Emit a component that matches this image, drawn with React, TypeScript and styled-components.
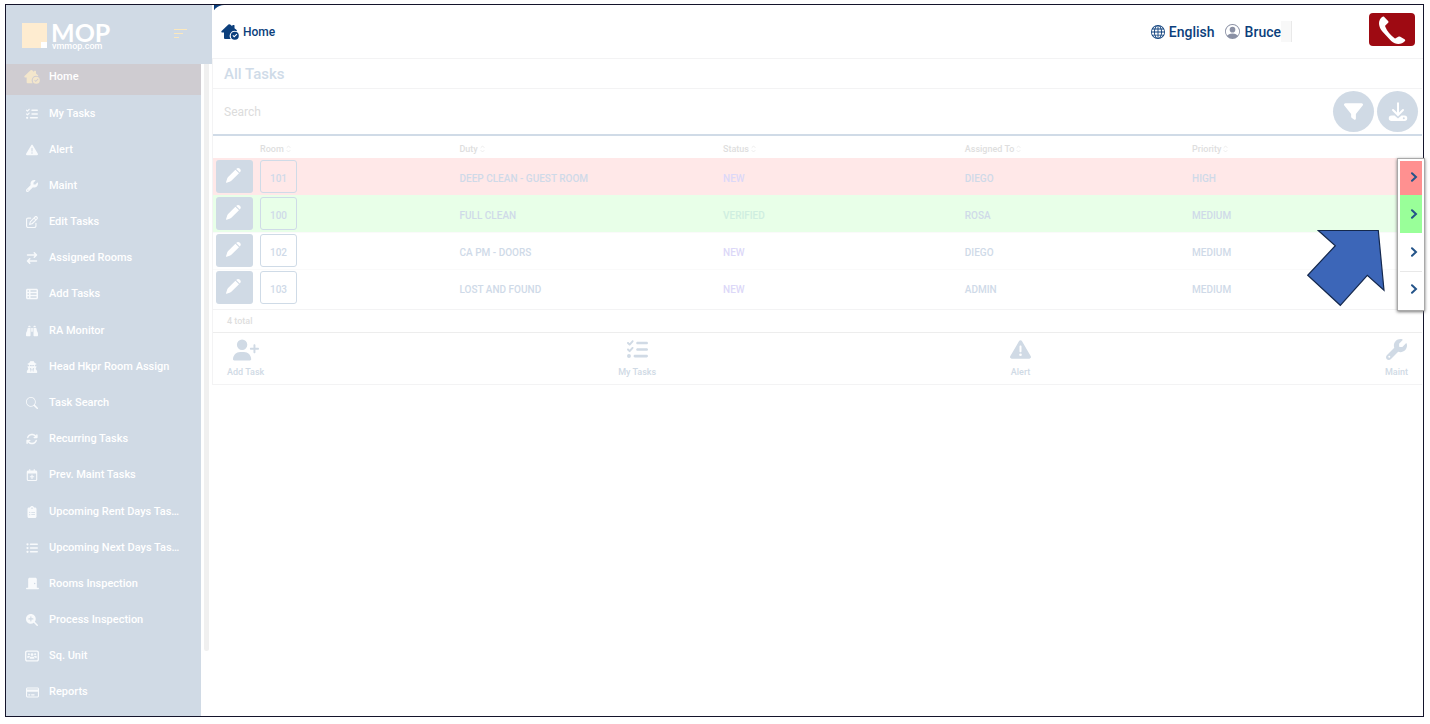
import React from "react";
import styled, { createGlobalStyle } from "styled-components";
import { BsGlobe, BsPersonCircle, BsSearch } from "react-icons/bs";
import {
  FaArrowRightArrowLeft,
  FaArrowsRotate,
  FaBinoculars,
  FaClipboardList,
  FaDoorClosed,
  FaFilter,
  FaListCheck,
  FaListUl,
  FaMagnifyingGlassPlus,
  FaRegCalendarPlus,
  FaRegCreditCard,
  FaRegPenToSquare,
  FaTableList,
  FaTriangleExclamation,
  FaUserPlus,
  FaUserSecret,
  FaUsersRectangle,
  FaWrench,
} from "react-icons/fa6";

const GlobalStyle = createGlobalStyle`
  *, *::before, *::after { box-sizing: border-box; }
  body {
    margin: 0;
    padding: 4px 6px 7px 5px;
    background: #fff;
    font-family: Roboto, "Liberation Sans", sans-serif;
    font-weight: 500;
    -webkit-font-smoothing: antialiased;
  }
  button, input { font: inherit; color: inherit; }
  button { padding: 0; border: 0; background: none; cursor: pointer; }
`;

const pale = "#d0dae5";
const navy = "#0c3f7c";
const line = "#f3f3f4";

const Frame = styled.div`
  display: grid;
  grid-template-columns: 206px minmax(0, 1fr);
  min-height: calc(100vh - 11px);
  border: 1px solid #14142b;
`;

/* Sidebar */
const Sidebar = styled.aside`
  display: flex;
  flex-direction: column;
`;

const Brand = styled.div`
  display: flex;
  align-items: center;
  gap: 4px;
  height: 59px;
  padding: 2px 24px 0 16px;
  background: ${pale};
`;

const BrandMark = styled.svg`
  width: 25px;
  height: 25px;
`;

const BrandText = styled.div`
  flex: 1;
  display: flex;
  flex-direction: column;
  color: #fff;
`;

const BrandName = styled.span`
  font: 700 25px/20px Lato, sans-serif;
`;

const BrandSite = styled.span`
  padding-left: 1px;
  font-size: 9px;
  line-height: 8px;
`;

const Burger = styled.button`
  display: flex;
  flex-direction: column;
  gap: 3px;
  width: 14px;
  margin-bottom: 4px;
`;

const BurgerLine = styled.span<{ $w: number }>`
  width: ${(p) => p.$w}px;
  height: 1px;
  background: #fbe8bd;
`;

const MenuArea = styled.div`
  flex: 1;
  display: grid;
  grid-template-columns: 195px 5px;
  column-gap: 3px;
`;

const Menu = styled.ul`
  display: grid;
  grid-template-rows: 31px;
  grid-auto-rows: 1fr;
  margin: 0;
  padding: 0 0 6px;
  list-style: none;
  background: ${pale};
`;

const MenuItem = styled.li<{ $active?: boolean }>`
  display: flex;
  padding-bottom: ${(p) => (p.$active ? 6 : 0)}px;
  background: ${(p) => (p.$active ? "#cfccd1" : "transparent")};
`;

const MenuLink = styled.a<{ $active?: boolean }>`
  flex: 1;
  display: grid;
  grid-template-columns: 16px 1fr;
  column-gap: 9px;
  align-items: center;
  padding: 1px 0 0 18px;
  color: #fff;
  font-size: 11px;
  line-height: 16px;
  text-decoration: none;

  svg {
    justify-self: center;
    color: ${(p) => (p.$active ? "#f3e6cc" : "#f8fafc")};
  }
`;

const ScrollThumb = styled.div`
  height: 90%;
  background: #f0f0f0;
  border-radius: 0 0 3px 3px;
`;

/* Main area */
const Corner = styled.main`
  min-width: 0;
  background: linear-gradient(${navy}, ${navy}) 2px 0 / 12px 10px no-repeat;
`;

const Content = styled.div`
  height: 100%;
  background: #fff;
  border-top-left-radius: 12px;
`;

const TopBar = styled.header`
  display: flex;
  align-items: center;
  height: 54px;
  padding: 0 8px 0 9px;
  border-bottom: 1px solid ${line};
  color: ${navy};
`;

const PageName = styled.h1`
  flex: 1;
  display: flex;
  align-items: center;
  gap: 4px;
  margin: 0;
  font-size: 12px;
  font-weight: 500;
  line-height: 20px;
`;

const TopButton = styled.button`
  display: flex;
  align-items: center;
  gap: 4px;
  margin-right: 10px;
  font-size: 14px;
  line-height: 20px;
`;

const UserButton = styled(TopButton)`
  gap: 5px;
  margin-right: 0;
  svg { color: #8a90a4; }
`;

const Caret = styled.span`
  width: 11px;
  height: 21px;
  margin-right: 77px;
  background: #f8f8f8;
  border-right: 1px solid #e9e9e9;
`;

const CallButton = styled.button`
  display: grid;
  place-items: center;
  width: 46px;
  height: 33px;
  margin-bottom: 4px;
  border-radius: 4px;
  background: #9e0a12;
`;

const Panel = styled.section`
  margin-right: 1px;
  border-left: 1px solid ${line};
  border-bottom: 1px solid ${line};
`;

const PanelTitle = styled.h2`
  margin: 0;
  padding: 2px 11px 0;
  border-bottom: 1px solid ${line};
  color: #cfdbe8;
  font-size: 15px;
  font-weight: 500;
  line-height: 27px;
`;

const SearchRow = styled.div`
  display: flex;
  align-items: center;
  gap: 3px;
  height: 47px;
  padding: 0 4px 0 11px;
  border-bottom: 2px solid #d0dbe7;
`;

const SearchInput = styled.input`
  flex: 1;
  min-width: 0;
  padding: 0;
  border: 0;
  outline: 0;
  background: none;
  font-size: 12px;
  font-weight: 400;
  line-height: 20px;
  &::placeholder { color: #dcdcdc; opacity: 1; }
`;

const RoundButton = styled.button`
  display: grid;
  place-items: center;
  width: 41px;
  height: 41px;
  border-radius: 50%;
  background: ${pale};
  color: #fff;
`;

const TableArea = styled.div`
  position: relative;
  padding-bottom: 3px;
  border-bottom: 1px solid ${line};
`;

const Table = styled.table`
  width: 100%;
  table-layout: fixed;
  border-collapse: collapse;
`;

const Th = styled.th<{ $w?: string }>`
  width: ${(p) => p.$w ?? "auto"};
  height: 22px;
  padding: 4px 4px 0;
  color: #dedede;
  font-size: 9px;
  font-weight: 500;
  line-height: 12px;
  text-align: left;

  svg { margin-left: 2px; vertical-align: -1px; }
`;

const Row = styled.tr<{ $bg?: string }>`
  background: ${(p) => p.$bg ?? "#fff"};
  box-shadow: inset 0 1px ${(p) => p.$bg ?? "#fafafa"};
`;

const Td = styled.td<{ $color?: string }>`
  height: 37px;
  padding: 4px 4px 0;
  color: ${(p) => p.$color ?? "#cfdae8"};
  font-size: 10px;
  line-height: 14px;
`;

const ButtonTd = styled.td`
  padding: 0 3px;
  vertical-align: middle;
`;

const EditButton = styled.button`
  display: grid;
  place-items: center;
  width: 37px;
  height: 33px;
  padding: 0 2px 3px 0;
  border-radius: 3px;
  background: ${pale};
`;

const RoomButton = styled.button`
  display: block;
  width: 37px;
  height: 33px;
  margin-left: 1px;
  padding-top: 4px;
  border: 1px solid #cfdbe7;
  border-radius: 3px;
  color: #cfdae8;
  font-size: 10px;
`;

const OpenColumn = styled.div`
  position: absolute;
  top: 22px;
  right: -3px;
  display: flex;
  flex-direction: column;
  width: 28px;
  padding: 2px 2px 1px;
  border: 1px solid #a9a9a9;
  background: #fff;
  box-shadow: 0 1px 3px #777;
`;

const OpenButton = styled.button<{ $bg?: string }>`
  display: grid;
  place-items: center end;
  width: 22px;
  height: 38px;
  padding-right: 4px;
  background: ${(p) => p.$bg ?? "#fff"};

  &:first-child {
    height: 34px;
    padding-bottom: 2px;
  }
  &:last-child {
    padding-bottom: 4px;
    border-top: 1px solid #e8e8e8;
  }
`;

const Pointer = styled.svg`
  position: absolute;
  top: 92px;
  right: 36px;
  width: 80px;
  height: 80px;
`;

const Total = styled.p`
  margin: 0;
  padding-left: 14px;
  border-bottom: 1px solid #ededed;
  color: #dedede;
  font-size: 9px;
  line-height: 22px;
`;

const Shortcuts = styled.nav`
  display: flex;
  justify-content: space-between;
  padding: 4px 14px 4px;
`;

const Shortcut = styled.a`
  display: grid;
  justify-items: center;
  grid-template-rows: 25px 16px;
  row-gap: 2px;
  align-items: center;
  color: ${pale};
  font-size: 9px;
  line-height: 16px;
  text-decoration: none;
`;

type IconProps = { size?: number };

const HouseCheck = ({ size = 18 }: IconProps) => (
  <svg width={size} height={size} viewBox="0 0 18 18" fill="currentColor" aria-hidden="true">
    <path d="M7.400 1.500Q8.300.8 9.200 1.500L11.300 3.300V2.600Q11.300 2.100 11.800 2.100H13Q13.500 2.100 13.500 2.600V5.200L15.700 7.100Q16.200 7.700 15.600 8.200Q11.600 6.600 9.400 10.200Q7.700 13.300 9.700 16H4Q3 16 3 15V9.500H1Q-.2 9.200.6 8Z" />
    <path
      fillRule="evenodd"
      d="M13.800 8.700a4 4 0 1 1 0 8 4 4 0 0 1 0-8ZM11.500 12.700 13.200 14.500 16.300 11.500 15.600 10.800 13.200 13.100 12.200 12Z"
    />
  </svg>
);

type MenuEntry = {
  label: string;
  Icon: React.ComponentType<IconProps>;
  size?: number;
  active?: boolean;
};

const menu: MenuEntry[] = [
  { label: "Home", Icon: HouseCheck, size: 16, active: true },
  { label: "My Tasks", Icon: FaListCheck },
  { label: "Alert", Icon: FaTriangleExclamation },
  { label: "Maint", Icon: FaWrench },
  { label: "Edit Tasks", Icon: FaRegPenToSquare },
  { label: "Assigned Rooms", Icon: FaArrowRightArrowLeft },
  { label: "Add Tasks", Icon: FaTableList },
  { label: "RA Monitor", Icon: FaBinoculars },
  { label: "Head Hkpr Room Assign", Icon: FaUserSecret },
  { label: "Task Search", Icon: BsSearch },
  { label: "Recurring Tasks", Icon: FaArrowsRotate },
  { label: "Prev. Maint Tasks", Icon: FaRegCalendarPlus },
  { label: "Upcoming Rent Days Tas…", Icon: FaClipboardList },
  { label: "Upcoming Next Days Tas…", Icon: FaListUl },
  { label: "Rooms Inspection", Icon: FaDoorClosed, size: 13 },
  { label: "Process Inspection", Icon: FaMagnifyingGlassPlus },
  { label: "Sq. Unit", Icon: FaUsersRectangle, size: 14 },
  { label: "Reports", Icon: FaRegCreditCard, size: 13 },
];

const columns = [
  { label: "Room", width: "16.5%" },
  { label: "Duty", width: "21.8%" },
  { label: "Status", width: "20%" },
  { label: "Assigned To", width: "18.8%" },
  { label: "Priority" },
];

const tasks = [
  { room: "101", duty: "DEEP CLEAN - GUEST ROOM", status: "NEW", who: "DIEGO", priority: "HIGH", bg: "#ffe8e8", strong: "#ff9090" },
  { room: "100", duty: "FULL CLEAN", status: "VERIFIED", who: "ROSA", priority: "MEDIUM", bg: "#e8ffe8", strong: "#99ff99" },
  { room: "102", duty: "CA PM - DOORS", status: "NEW", who: "DIEGO", priority: "MEDIUM" },
  { room: "103", duty: "LOST AND FOUND", status: "NEW", who: "ADMIN", priority: "MEDIUM" },
];

const SortIcon = () => (
  <svg width="5" height="8" viewBox="0 0 5 8" fill="none" stroke="#ececec" aria-hidden="true">
    <path d="M.7 2.8 2.5 1l1.8 1.8M.7 5.2 2.5 7l1.8-1.8" />
  </svg>
);

const Pencil = () => (
  <svg width="17" height="17" viewBox="0 0 17 17" fill="#fff" aria-hidden="true">
    <path d="M10.4 2.7 14 6.3 6.6 13.6Q6 14.2 5.2 14.5L1.7 15.7Q.8 16 1.1 15.1L2.2 11.6Q2.5 10.7 3.1 10.1Z" />
    <path d="M11.2 1.9Q13.1.1 14.9 1.8 16.7 3.6 14.8 5.500Z" />
  </svg>
);

const Chevron = () => (
  <svg width="8" height="10" viewBox="0 0 8 10" fill="none" stroke="#245489" strokeWidth="2" strokeLinecap="round" aria-hidden="true">
    <path d="M2 1.2 6 5 2 8.8" />
  </svg>
);

const DownloadIcon = () => (
  <svg width="20" height="20" viewBox="0 0 20 20" fill="none" aria-hidden="true">
    <path d="M10 1.2V12.500M5 8l5 5L15 8" stroke="#fff" strokeWidth="2" strokeLinecap="round" />
    <path d="M3.500 13.500H6.500L10 16.500 13.500 13.500H16.500A2.700 2.700 0 0 1 16.500 19H3.500A2.700 2.700 0 0 1 3.500 13.500Z" fill="#fff" />
    <circle cx="15.800" cy="16.200" r="1" fill={pale} />
  </svg>
);

const Handset = () => (
  <svg width="28" height="30" viewBox="0 0 28 30" fill="#fff" aria-hidden="true">
    <path d="M1.200 6.500C2 3.600 3.800 1.800 5.300 1.500Q6 1.400 6.500 2.200L10.300 6.200Q10.800 7 10.200 7.700L7.300 10.600Q7 11 7.300 11.700C9 16 12.500 20.300 16.600 23.200Q17.400 23.600 18 23.100L20.800 21.600Q21.600 21.200 22.300 21.700L26.900 24.600Q27.600 25.200 27 26C24.500 28.900 20.500 29.500 16.700 28.300Q14.800 27.600 13.200 26L5.300 17.600C2.300 14.300.4 10.300 1.200 6.500Z" />
  </svg>
);

export default function App() {
  return (
    <>
      <GlobalStyle />
      <Frame>
        <Sidebar>
          <Brand>
            <BrandMark viewBox="0 0 25 25" aria-hidden="true">
              <path fill="#feecd0" d="M0 0h25v25H0z" />
              <path fill="#fff" d="M19 19h6v6h-6z" />
            </BrandMark>
            <BrandText>
              <BrandName>MOP</BrandName>
              <BrandSite>vmmop.com</BrandSite>
            </BrandText>
            <Burger aria-label="Toggle menu">
              <BurgerLine $w={13} />
              <BurgerLine $w={9} />
              <BurgerLine $w={5} />
            </Burger>
          </Brand>
          <MenuArea>
            <Menu>
              {menu.map(({ label, Icon, size = 12, active }) => (
                <MenuItem key={label} $active={active}>
                  <MenuLink href="#" $active={active}>
                    <Icon size={size} />
                    {label}
                  </MenuLink>
                </MenuItem>
              ))}
            </Menu>
            <ScrollThumb />
          </MenuArea>
        </Sidebar>

        <Corner>
          <Content>
            <TopBar>
              <PageName>
                <HouseCheck size={18} />
                Home
              </PageName>
              <TopButton>
                <BsGlobe size={14} />
                English
              </TopButton>
              <UserButton>
                <BsPersonCircle size={15} />
                Bruce
              </UserButton>
              <Caret />
              <CallButton aria-label="Call">
                <Handset />
              </CallButton>
            </TopBar>

            <Panel>
              <PanelTitle>All Tasks</PanelTitle>
              <SearchRow>
                <SearchInput type="search" placeholder="Search" aria-label="Search" />
                <RoundButton aria-label="Filter">
                  <FaFilter size={19} />
                </RoundButton>
                <RoundButton aria-label="Download">
                  <DownloadIcon />
                </RoundButton>
              </SearchRow>
              <TableArea>
                <Table>
                  <thead>
                    <tr>
                      <Th $w="43px" aria-label="Edit" />
                      {columns.map((c) => (
                        <Th key={c.label} $w={c.width} scope="col">
                          {c.label}
                          <SortIcon />
                        </Th>
                      ))}
                    </tr>
                  </thead>
                  <tbody>
                    {tasks.map((t) => (
                      <Row key={t.room} $bg={t.bg}>
                        <ButtonTd>
                          <EditButton aria-label={`Edit ${t.room}`}>
                            <Pencil />
                          </EditButton>
                        </ButtonTd>
                        <ButtonTd>
                          <RoomButton>{t.room}</RoomButton>
                        </ButtonTd>
                        <Td>{t.duty}</Td>
                        <Td $color={t.status === "NEW" ? "#dcd8f8" : "#cfeee0"}>{t.status}</Td>
                        <Td>{t.who}</Td>
                        <Td>{t.priority}</Td>
                      </Row>
                    ))}
                  </tbody>
                </Table>
                <OpenColumn>
                  {tasks.map((t) => (
                    <OpenButton key={t.room} $bg={t.strong} aria-label={`Open ${t.room}`}>
                      <Chevron />
                    </OpenButton>
                  ))}
                </OpenColumn>
                <Pointer viewBox="0 0 80 80" aria-hidden="true">
                  <path
                    d="M12.300 2.500H72.300L78 62.300 61.300 47.300 34.300 77.300 1.700 47.300 29.300 17.700Z"
                    fill="#3c66b8"
                    stroke="#14284d"
                    strokeWidth="1.200"
                  />
                </Pointer>
              </TableArea>
              <Total>4 total</Total>
              <Shortcuts>
                <Shortcut href="#">
                  <FaUserPlus size={26} />
                  Add Task
                </Shortcut>
                <Shortcut href="#">
                  <FaListCheck size={21} />
                  My Tasks
                </Shortcut>
                <Shortcut href="#">
                  <FaTriangleExclamation size={21} />
                  Alert
                </Shortcut>
                <Shortcut href="#">
                  <FaWrench size={21} />
                  Maint
                </Shortcut>
              </Shortcuts>
            </Panel>
          </Content>
        </Corner>
      </Frame>
    </>
  );
}
